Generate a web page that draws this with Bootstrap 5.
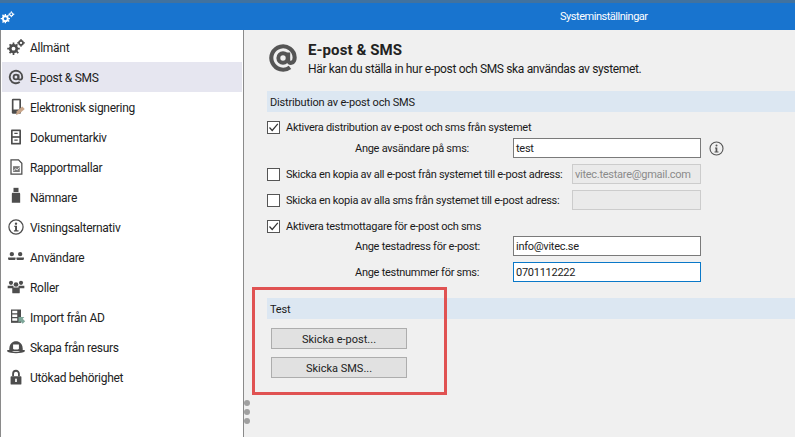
<!doctype html>
<html lang="sv"><head><meta charset="utf-8">
<link href="https://cdn.jsdelivr.net/npm/bootstrap@5.3.0/dist/css/bootstrap.min.css" rel="stylesheet">
<style>
html,body{height:100%;}
body{margin:0;background:#f0f0f0;font-family:Roboto,"Liberation Sans",sans-serif;font-size:11px;line-height:16px;color:#1a1a1a;overflow:hidden;letter-spacing:-.27px}
.shell{width:795px;height:437px;position:relative;overflow:hidden}
.titlebar{height:30px;background:#1874cf;border-top:3px solid #41729f;color:#fff;position:relative}
.titlebar svg{position:absolute;left:0;top:7px}
.title-text{position:absolute;left:560px;top:6px;letter-spacing:-.47px}
.main{height:407px}
.side{width:244px;background:#fff;border-left:1px solid #8a8a8a;border-right:1px solid #8a8a8a;padding:2px 1px 0 1px;position:relative;font-size:12px;letter-spacing:-.28px}
.side-item{height:30px;padding:2px 0 0 4px;gap:4px;color:#222}
.side-item svg{width:20px;height:20px;flex:none;margin-bottom:2px}
.side-item.sel{background:#e6e6f0}
.grip{position:absolute;right:-7px;top:370px;gap:3px}
.grip i{display:block;width:6px;height:6px;border-radius:50%;background:#a0a0a0}
.pane{padding:0 0 0 23px;min-width:0}
.head{height:61px;padding-top:11px;gap:11px;padding-left:2px}
.head svg{margin-top:3px;flex:none}
.h-title{font-size:15px;font-weight:700;line-height:18px;color:#222;letter-spacing:.1px}
.h-sub{margin-top:2px;font-size:12px;letter-spacing:-.35px}
.sec{height:21px;background:#dce7f2;padding-left:3px;line-height:23px;letter-spacing:-.17px}
.opt{height:20px}
.opt-wide{width:434px}
.cb{width:13px;height:13px;border:1px solid #555;background:#fff;margin-right:6px;flex:none;display:flex;align-items:center;justify-content:center}
.lbl{padding-top:2px}
.lab-in{padding-left:88px;height:20px}
.lab-in>.lbl{width:158px;flex:none}
.fld{height:20px;border:1px solid #7a7a7a;background:#fff;padding:0 2px;line-height:20px;width:188px;flex:none;color:#222}
.fld.off{width:129px;border-color:#ccc;background:#eaeaea;color:#8a8a8a}
.fld.focus{border-color:#0a78c8}
.fill{flex:1;min-width:0;white-space:nowrap}
.gap1{margin-top:1px}
.gap5{margin-top:5px}
.gap6{margin-top:6px}
.test-sec{margin-top:16px}
.act{width:136px;height:21px;background:#e1e1e1;border:1px solid #adadad;text-align:center;line-height:21px;margin-left:4px;color:#222;letter-spacing:0}
.act-a{margin-top:9px}
.act-b{margin-top:8px}
.redbox{position:absolute;left:252px;top:287px;width:195px;height:108px;border:3px solid #e05252}
</style></head>
<body>
<div class="shell">
 <div class="titlebar">
  <svg width="16" height="16" viewBox="0 0 24 24"><g fill="#fff"><circle cx="8" cy="13" r="5"/><path d="M7 6h2v3H7zM7 17h2v3H7zM1 12h3v2H1zM12 12h3v2h-3zM3 8l1.500-1.500 2 2L5 10zM11 16l1.500-1.500 2 2L13 18zM3 18l2-2 1.500 1.500-2 2zM10 9l2-2 1.500 1.500-2 2z"/><circle cx="17" cy="6.500" r="3.300"/><path d="M16.300 2h1.400v2h-1.400zM16.300 9h1.400v2h-1.400zM12.500 5.800h2v1.400h-2zM19.500 5.800h2v1.400h-2z"/></g><circle cx="8" cy="13" r="2.200" fill="#1874cf"/><circle cx="17" cy="6.500" r="1.500" fill="#1874cf"/></svg>
  <div class="title-text">Systeminställningar</div>
 </div>
 <div class="main d-flex">
  <nav class="side d-flex flex-column">
   <div class="side-item d-flex align-items-center"><svg viewBox="0 0 24 24"><g fill="#4d4d4d"><circle cx="9" cy="14" r="5.500"/><path d="M8 6.500h2v3H8zM8 18.500h2v3H8zM1.500 13h3v2h-3zM13.500 13h3v2h-3zM3.500 9.500 5 8l2 2-1.500 1.500zM12 18l1.500-1.500 2 2L14 20zM3.500 18.500l2-2L7 18l-2 2zM11 10l2-2 1.500 1.500-2 2z"/><circle cx="18" cy="7" r="3.500"/><path d="M17.200 2.300h1.600v2h-1.600zM17.200 9.700h1.600v2h-1.600zM13.300 6.200h2v1.600h-2zM20.700 6.200h2v1.600h-2z"/></g><circle cx="9" cy="14" r="2.300" fill="#fff"/><circle cx="18" cy="7" r="1.400" fill="#fff"/></svg>Allmänt</div>
   <div class="side-item sel d-flex align-items-center"><svg viewBox="0 0 24 24"><circle cx="12" cy="12" r="2.900" fill="none" stroke="#4d4d4d" stroke-width="2.200"/><path d="M15 9v4.500c0 2.500 4.500 2.500 4.500-1.500a7.500 7.500 0 1 0-3 6" fill="none" stroke="#4d4d4d" stroke-width="2.200"/></svg>E-post &amp; SMS</div>
   <div class="side-item d-flex align-items-center"><svg viewBox="0 0 24 24"><rect x="7" y="2" width="11" height="18" rx="1.500" fill="#4d4d4d"/><rect x="9" y="4" width="7" height="11" fill="#fff"/><path d="M12 21.500l1-4.500 6.500-5.500 3 3-6.500 5.500z" fill="#c9a68a"/></svg>Elektronisk signering</div>
   <div class="side-item d-flex align-items-center"><svg viewBox="0 0 24 24"><rect x="6" y="3" width="12" height="18" rx="1" fill="#4d4d4d"/><rect x="8" y="5" width="8" height="6" fill="#fff"/><rect x="8" y="13" width="8" height="6" fill="#fff"/><path d="M10 7h4v1.500h-4zM10 15h4v1.500h-4z" fill="#4d4d4d"/></svg>Dokumentarkiv</div>
   <div class="side-item d-flex align-items-center"><svg viewBox="0 0 24 24"><path d="M6 3.500h9l4 4v13H6z" fill="#fff" stroke="#4d4d4d" stroke-width="1.500"/><rect x="8.500" y="11" width="8" height="7" fill="#777"/><path d="M9 17l2.500-3 2 1.500L16 12.500" stroke="#fff" fill="none"/></svg>Rapportmallar</div>
   <div class="side-item d-flex align-items-center"><svg viewBox="0 0 24 24"><rect x="9" y="1" width="6" height="5" fill="#4d4d4d"/><path d="M8.500 7h7c1 0 1.500.5 1.500 1.500V19H7V8.500C7 7.500 7.500 7 8.500 7z" fill="#4d4d4d"/></svg>Nämnare</div>
   <div class="side-item d-flex align-items-center"><svg viewBox="0 0 24 24"><circle cx="12" cy="12" r="8.500" fill="none" stroke="#4d4d4d" stroke-width="1.500"/><circle cx="12" cy="8" r="1.400" fill="#4d4d4d"/><path d="M10 10.500h3.200V16H15v1.500H9.500V16h1.400v-4H10z" fill="#4d4d4d"/></svg>Visningsalternativ</div>
   <div class="side-item d-flex align-items-center"><svg viewBox="0 0 24 24"><g fill="#4d4d4d"><circle cx="7" cy="8.500" r="2.600"/><circle cx="17" cy="8.500" r="2.600"/><path d="M2.500 12.500h9v2a1 1 0 0 1-1 1h-7a1 1 0 0 1-1-1zM12.500 12.500h9v2a1 1 0 0 1-1 1h-7a1 1 0 0 1-1-1z"/></g></svg>Användare</div>
   <div class="side-item d-flex align-items-center"><svg viewBox="0 0 24 24"><g fill="#4d4d4d"><circle cx="6" cy="7" r="2.500"/><circle cx="18" cy="7" r="2.500"/><circle cx="12" cy="9" r="2.800"/><path d="M2 10.500h7v3H2zM15 10.500h7v3h-7z"/><path d="M7.500 12.500h9v6a1 1 0 0 1-1 1h-7a1 1 0 0 1-1-1z"/></g></svg>Roller</div>
   <div class="side-item d-flex align-items-center"><svg viewBox="0 0 24 24"><rect x="6" y="3" width="12" height="16" fill="#4d4d4d"/><g fill="#fff"><rect x="7.500" y="4.500" width="6" height="3"/><rect x="7.500" y="9" width="6" height="3"/><rect x="7.500" y="13.500" width="6" height="3"/></g><path d="M15 12l7 0-2 2 3 3-3 3-3-3-2 2z" fill="#7fa79a"/></svg>Import från AD</div>
   <div class="side-item d-flex align-items-center"><svg viewBox="0 0 24 24"><path d="M4 17c-1-9 4-12 8-12s9 3 8 12z" fill="#4d4d4d"/><path d="M1.500 15.500h5c1 3.500 10 3.500 11 0h5v2c-3 2.500-18 2.500-21 0z" fill="#4d4d4d"/><path d="M8.500 9v5c1 1.500 6 1.500 7 0V9" fill="#fff"/></svg>Skapa från resurs</div>
   <div class="side-item d-flex align-items-center"><svg viewBox="0 0 24 24"><rect x="5.500" y="11" width="13" height="10" rx="1" fill="#4d4d4d"/><path d="M8.500 11V8a3.500 3.500 0 0 1 7 0v3" fill="none" stroke="#4d4d4d" stroke-width="2.200"/><rect x="11" y="14" width="2" height="4" fill="#fff"/></svg>Utökad behörighet</div>
   <div class="grip d-flex flex-column"><i></i><i></i><i></i></div>
  </nav>
  <div class="pane flex-grow-1">
   <div class="head d-flex">
    <svg width="28" height="28" viewBox="0 0 30 30"><circle cx="15" cy="15" r="5" fill="none" stroke="#555" stroke-width="4.200"/><path d="M20.500 9v8.500c0 4 7 4 7-3A12.500 12.500 0 1 0 22.500 25" fill="none" stroke="#555" stroke-width="4.400"/></svg>
    <div><div class="h-title">E-post &amp; SMS</div><div class="h-sub">Här kan du ställa in hur e-post och SMS ska användas av systemet.</div></div>
   </div>
   <div class="sec">Distribution av e-post och SMS</div>
   <div class="opt gap5 d-flex align-items-center"><span class="cb"><svg width="11" height="11" viewBox="0 0 11 11"><path d="M1.500 5.500 4.200 8.500 9.800 1.800" fill="none" stroke="#333" stroke-width="1.200"/></svg></span><span class="lbl">Aktivera distribution av e-post och sms från systemet</span></div>
   <div class="lab-in gap1 d-flex align-items-center"><span class="lbl">Ange avsändare på sms:</span><div class="fld">test</div>
    <svg class="ms-2" width="15" height="15" viewBox="0 0 15 15"><circle cx="7.500" cy="7.500" r="6.500" fill="none" stroke="#555" stroke-width="1.100"/><circle cx="7.500" cy="4.500" r="1" fill="#555"/><path d="M6 6.500h2.300v4H9.500v1h-4v-1h1.100V7.500H6z" fill="#555"/></svg></div>
   <div class="opt opt-wide gap6 d-flex align-items-center"><span class="cb"></span><span class="lbl fill">Skicka en kopia av all e-post från systemet till e-post adress:</span><div class="fld off">vitec.testare@gmail.com</div></div>
   <div class="opt opt-wide gap6 d-flex align-items-center"><span class="cb"></span><span class="lbl fill">Skicka en kopia av alla sms från systemet till e-post adress:</span><div class="fld off"></div></div>
   <div class="opt gap6 d-flex align-items-center"><span class="cb"><svg width="11" height="11" viewBox="0 0 11 11"><path d="M1.500 5.500 4.200 8.500 9.800 1.800" fill="none" stroke="#333" stroke-width="1.200"/></svg></span><span class="lbl">Aktivera testmottagare för e-post och sms</span></div>
   <div class="lab-in d-flex align-items-center"><span class="lbl">Ange testadress för e-post:</span><div class="fld">info@vitec.se</div></div>
   <div class="lab-in gap6 d-flex align-items-center"><span class="lbl">Ange testnummer för sms:</span><div class="fld focus">0701112222</div></div>
   <div class="sec test-sec">Test</div>
   <div class="act act-a">Skicka e-post...</div>
   <div class="act act-b">Skicka SMS...</div>
  </div>
 </div>
 <div class="redbox"></div>
</div>
<script src="https://cdn.jsdelivr.net/npm/bootstrap@5.3.0/dist/js/bootstrap.bundle.min.js"></script>
</body></html>
